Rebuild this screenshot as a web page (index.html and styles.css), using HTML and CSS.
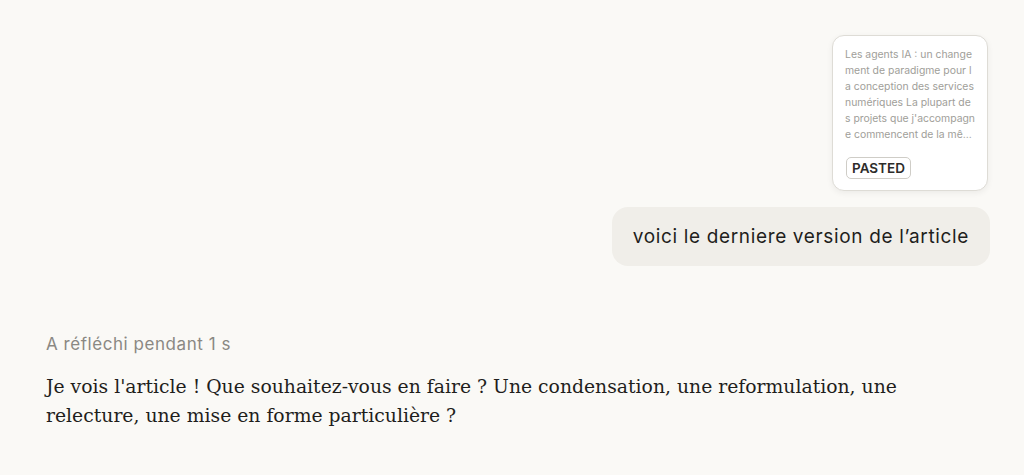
FILE: index.html
```html
<!doctype html>
<html lang="fr">
  <head>
    <meta charset="UTF-8" />
    <meta name="viewport" content="width=device-width, initial-scale=1.0" />
    <title>Conversation</title>
    <link rel="stylesheet" href="styles.css">
  </head>
  <body>
    <main class="thread">
      <div class="user-turn">
        <div class="paste-card">
          <p class="paste-preview">
            Les agents IA : un changement de paradigme pour la conception des services numériques La plupart des projets que j'accompagne commencent de la même manière : une équipe, un besoin, un outil.
          </p>
          <span class="paste-badge">PASTED</span>
        </div>
        <div class="user-bubble">voici le derniere version de l’article</div>
      </div>

      <div class="assistant-turn">
        <div class="thinking-label">A réfléchi pendant 1 s</div>
        <p class="assistant-text">
          Je vois l'article ! Que souhaitez-vous en faire ? Une condensation, une reformulation, une relecture, une mise en forme particulière ?
        </p>
      </div>
    </main>
  </body>
</html>
```

FILE: styles.css
```css
* {
  margin: 0;
  padding: 0;
  box-sizing: border-box;
}

body {
  font-family: Inter, "Noto Sans", sans-serif;
  background: #faf9f6;
  color: #1f1e1c;
  height: 100vh;
  overflow: hidden;
}

.thread {
  padding: 35px 34px 0 46px;
}

.user-turn {
  display: flex;
  flex-direction: column;
  align-items: flex-end;
  gap: 16px;
}

.paste-card {
  width: 156px;
  height: 156px;
  margin-right: 2px;
  padding: 11px 11px 11px 12px;
  background: #fff;
  border: 1px solid #dedcd6;
  border-radius: 12px;
  box-shadow: 0 2px 6px rgba(0, 0, 0, 0.06);
  display: flex;
  flex-direction: column;
  justify-content: space-between;
  align-items: flex-start;
}

.paste-preview {
  font-size: 10.4px;
  line-height: 16px;
  color: #a09e99;
  word-break: break-all;
  display: -webkit-box;
  -webkit-line-clamp: 6;
  -webkit-box-orient: vertical;
  overflow: hidden;
}

.paste-badge {
  font-size: 13.5px;
  font-weight: 600;
  color: #2d2c2a;
  background: #fff;
  border: 1px solid #cfcdc7;
  border-radius: 5px;
  padding: 2px 5px;
  line-height: 16px;
  margin-left: 1px;
}

.user-bubble {
  background: #f0eee9;
  border-radius: 16px;
  padding: 17px 21px;
  font-size: 19px;
  letter-spacing: 0.65px;
  line-height: 25px;
  color: #1f1e1c;
}

.assistant-turn {
  margin-top: 66px;
}

.thinking-label {
  font-size: 17px;
  letter-spacing: 0.55px;
  line-height: 24px;
  color: #8a8883;
}

.assistant-text {
  margin-top: 16px;
  font-family: "DejaVu Serif", "Liberation Serif", serif;
  font-size: 18.8px;
  line-height: 29px;
  color: #1f1e1c;
}
```
